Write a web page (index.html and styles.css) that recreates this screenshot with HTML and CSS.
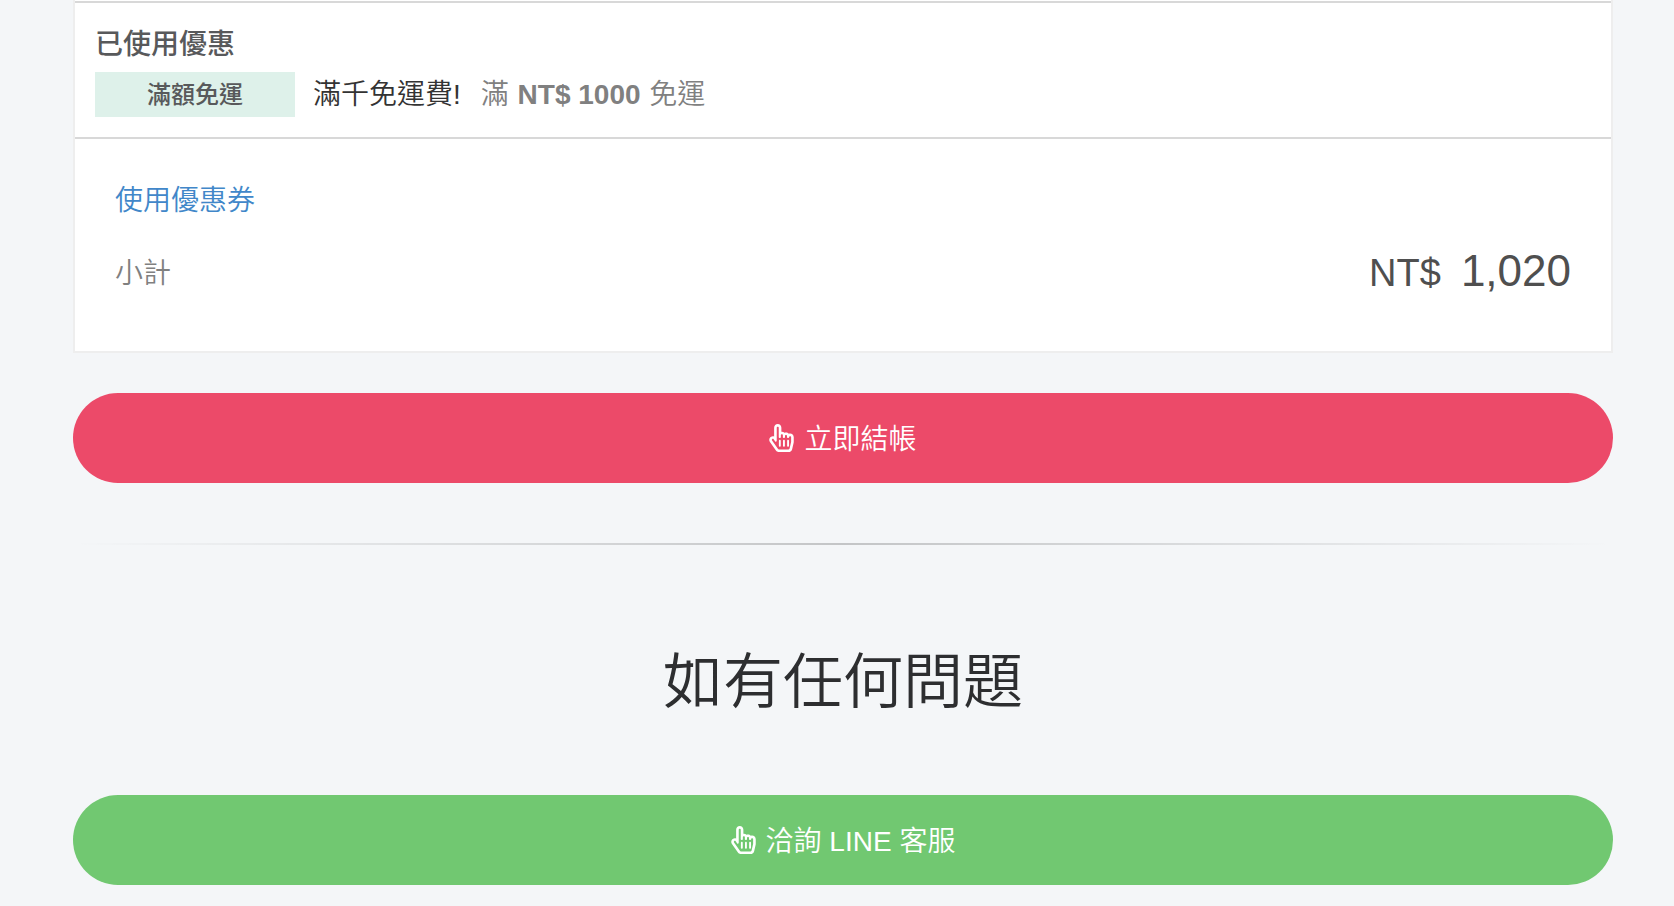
FILE: index.html
```html
<!DOCTYPE html>
<html lang="zh-Hant">
<head>
<meta charset="utf-8">
<meta name="viewport" content="width=device-width, initial-scale=1">
<title>購物車</title>
<link rel="stylesheet" href="styles.css">
</head>
<body>
<svg class="sprite" aria-hidden="true">
  <symbol id="hand-pointer" viewBox="0 0 448 512">
    <path d="M358.182 179.361c-19.493-24.768-52.679-31.945-79.872-19.098-15.127-15.687-36.182-22.487-56.595-19.629V67c0-36.944-29.736-67-66.286-67S89.143 30.056 89.143 67v161.129c-19.909-7.41-43.272-5.094-62.083 8.872-29.355 21.795-35.793 63.333-14.55 93.152l109.699 154.001C134.632 501.59 154.741 512 176 512h178.286c30.802 0 57.574-21.5 64.557-51.797l27.429-118.999A67.873 67.873 0 0 0 448 326v-84c0-46.844-46.625-79.273-89.818-62.639zM80.985 279.697l27.126 38.079c8.995 12.626 29.031 6.287 29.031-9.283V67c0-25.12 36.571-25.16 36.571 0v175c0 8.836 7.163 16 16 16h6.857c8.837 0 16-7.164 16-16v-35c0-25.12 36.571-25.16 36.571 0v35c0 8.836 7.163 16 16 16H272c8.837 0 16-7.164 16-16v-21c0-25.12 36.571-25.16 36.571 0v21c0 8.836 7.163 16 16 16h6.857c8.837 0 16-7.164 16-16 0-25.121 36.571-25.16 36.571 0v84c0 1.488-.169 2.977-.502 4.423l-27.43 119.001c-1.978 8.582-9.29 14.576-17.782 14.576H176c-5.769 0-11.263-2.878-14.697-7.697l-109.712-154c-14.406-20.223 14.994-42.707 29.394-22.606zM176.143 400v-96c0-8.837 6.268-16 14-16h6c7.732 0 14 7.163 14 16v96c0 8.837-6.268 16-14 16h-6c-7.733 0-14-7.163-14-16zm75.428 0v-96c0-8.837 6.268-16 14-16h6c7.732 0 14 7.163 14 16v96c0 8.837-6.268 16-14 16h-6c-7.732 0-14-7.163-14-16zM327 400v-96c0-8.837 6.268-16 14-16h6c7.732 0 14 7.163 14 16v96c0 8.837-6.268 16-14 16h-6c-7.732 0-14-7.163-14-16z"/>
  </symbol>
</svg>
<main class="page">
  <section class="card">
    <div class="discounts">
      <h2 class="discounts-title">已使用優惠</h2>
      <div class="discount">
        <span class="badge">滿額免運</span>
        <span class="discount-name">滿千免運費!</span>
        <span class="discount-rule">滿 <b>NT$ 1000</b> 免運</span>
      </div>
    </div>
    <div class="summary">
      <a class="coupon" href="#coupon">使用優惠券</a>
      <div class="subtotal">
        <span class="subtotal-label">小計</span>
        <span class="price"><span class="currency">NT$</span><span class="amount">1,020</span></span>
      </div>
    </div>
  </section>
  <button class="btn btn-checkout" type="button"><svg class="icon" aria-hidden="true"><use href="#hand-pointer"/></svg><span class="btn-label">立即結帳</span></button>
  <hr class="divider">
  <h1 class="help-title">如有任何問題</h1>
  <a class="btn btn-line" href="#line"><svg class="icon" aria-hidden="true"><use href="#hand-pointer"/></svg><span class="btn-label">洽詢 LINE 客服</span></a>
</main>
</body>
</html>
```
FILE: styles.css
```css
* {
  box-sizing: border-box;
}

body {
  margin: 0;
  background: #f4f6f8;
  color: #333;
  font-family: "Liberation Sans", "Noto Sans CJK TC", sans-serif;
  font-size: 28px;
  font-weight: 350;
  line-height: 40px;
}

.sprite {
  display: none;
}

.page {
  display: flex;
  flex-direction: column;
  padding: 0 61px 21px 73px;
}

.card {
  background: #fff;
  border: 2px solid #eee;
  border-top: 0;
}

.discounts {
  margin-top: 1px;
  padding: 22px 20px 20px;
  border-top: 2px solid #d8d8d8;
  border-bottom: 2px solid #d8d8d8;
}

.discounts-title {
  margin: 0 0 7px;
  color: #58595b;
  font-size: 28px;
  font-weight: 500;
  line-height: 40px;
}

.discount {
  display: flex;
  align-items: center;
}

.badge {
  width: 200px;
  margin-right: 18px;
  background: #def1ea;
  color: #58595b;
  font-size: 24px;
  font-weight: 500;
  line-height: 45px;
  text-align: center;
}

.discount-name {
  margin-right: 20px;
}

.discount-rule {
  color: #808080;
}

.discount-rule b {
  margin: 0 1px;
  font-weight: bold;
}

.summary {
  padding: 42px 40px 44px;
}

.coupon {
  display: inline-block;
  color: #4187c9;
  text-decoration: none;
}

.subtotal {
  display: flex;
  align-items: flex-start;
  justify-content: space-between;
  margin-top: 20px;
  line-height: 66px;
}

.subtotal-label {
  color: #808080;
}

.price {
  display: flex;
  align-items: baseline;
  gap: 20px;
  color: #4f4f4f;
  line-height: 60px;
}

.currency {
  font-size: 38px;
}

.amount {
  font-size: 44px;
}

.btn {
  display: flex;
  align-items: center;
  justify-content: center;
  gap: 10px;
  height: 90px;
  padding: 0 24px;
  border: 0;
  border-radius: 45px;
  color: #fff;
  font: inherit;
  text-decoration: none;
}

.btn-label {
  padding-top: 4px;
}

.btn-checkout {
  margin-top: 40px;
  background: #ec4a69;
}

.btn-line {
  background: #71c871;
}

.icon {
  width: 25px;
  height: 28px;
  fill: currentColor;
}

.divider {
  width: 100%;
  height: 2px;
  margin: 60px 0;
  border: 0;
  background: linear-gradient(to right, rgba(0, 0, 0, 0), rgba(0, 0, 0, 0.2), rgba(0, 0, 0, 0));
}

.help-title {
  margin: 33px 0 67px;
  color: #2d2e30;
  font-size: 60px;
  font-weight: 350;
  line-height: 90px;
  text-align: center;
}
```
